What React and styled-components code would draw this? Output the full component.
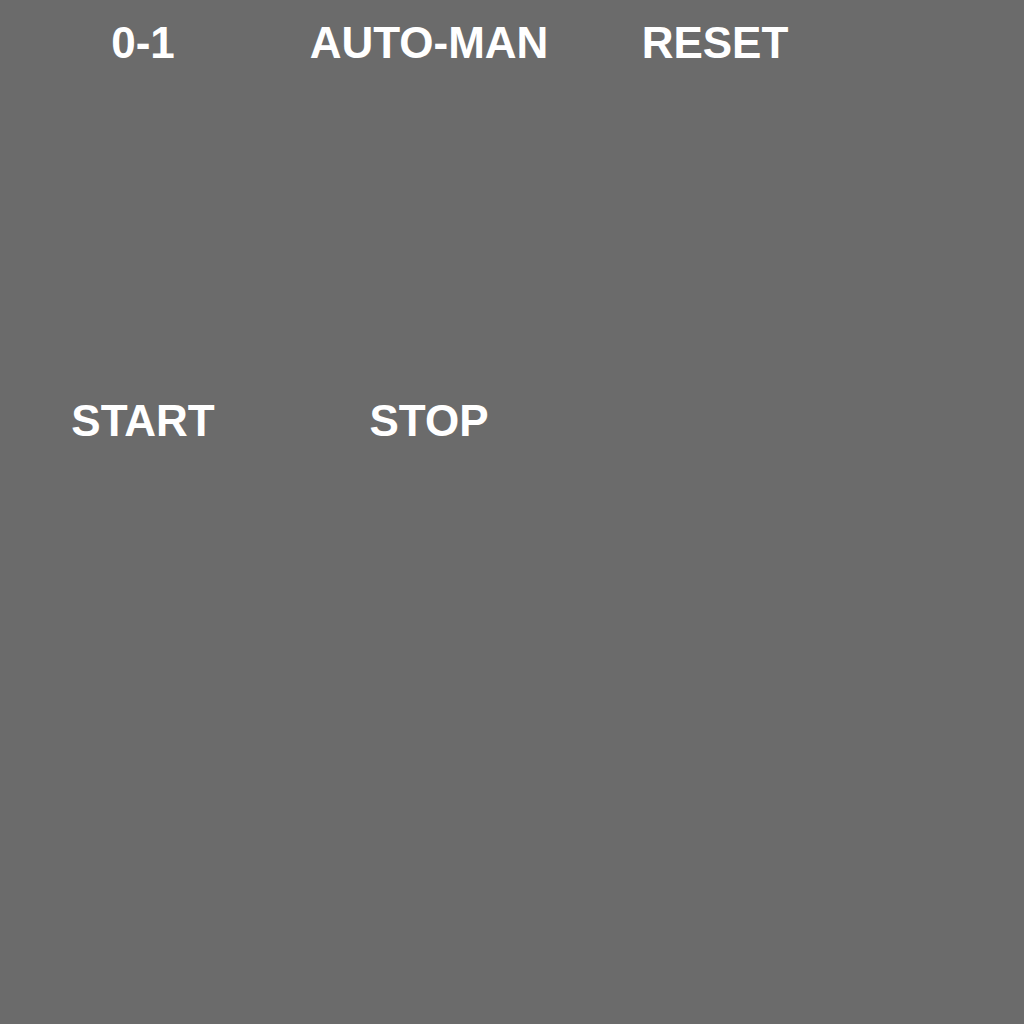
import React from 'react';
import styled, { createGlobalStyle } from 'styled-components';

const Global = createGlobalStyle`
  html, body {
    margin: 0;
    padding: 0;
    background: #6b6b6b;
  }
  body {
    font-family: 'Liberation Sans', Arial, sans-serif;
  }
`;

const Panel = styled.div`
  width: 1024px;
  height: 1024px;
  box-sizing: border-box;
  padding-top: 18px;
  display: grid;
  grid-template-columns: repeat(3, 286px);
  grid-auto-rows: 378px;
  background: #6b6b6b;
`;

const Control = styled.div`
  display: flex;
  flex-direction: column;
  align-items: center;
`;

const Label = styled.div`
  color: #ffffff;
  font-size: 44px;
  font-weight: bold;
  line-height: normal;
  text-align: center;
  white-space: nowrap;
`;

const controls = [
  { id: 'sel', label: '0-1' },
  { id: 'mode', label: 'AUTO-MAN' },
  { id: 'reset', label: 'RESET' },
  { id: 'start', label: 'START' },
  { id: 'stop', label: 'STOP' },
];

const App = () => {
  return (
    <>
      <Global />
      <Panel>
        {controls.map((c) => (
          <Control key={c.id}>
            <Label>{c.label}</Label>
          </Control>
        ))}
      </Panel>
    </>
  );
};

export default App;
